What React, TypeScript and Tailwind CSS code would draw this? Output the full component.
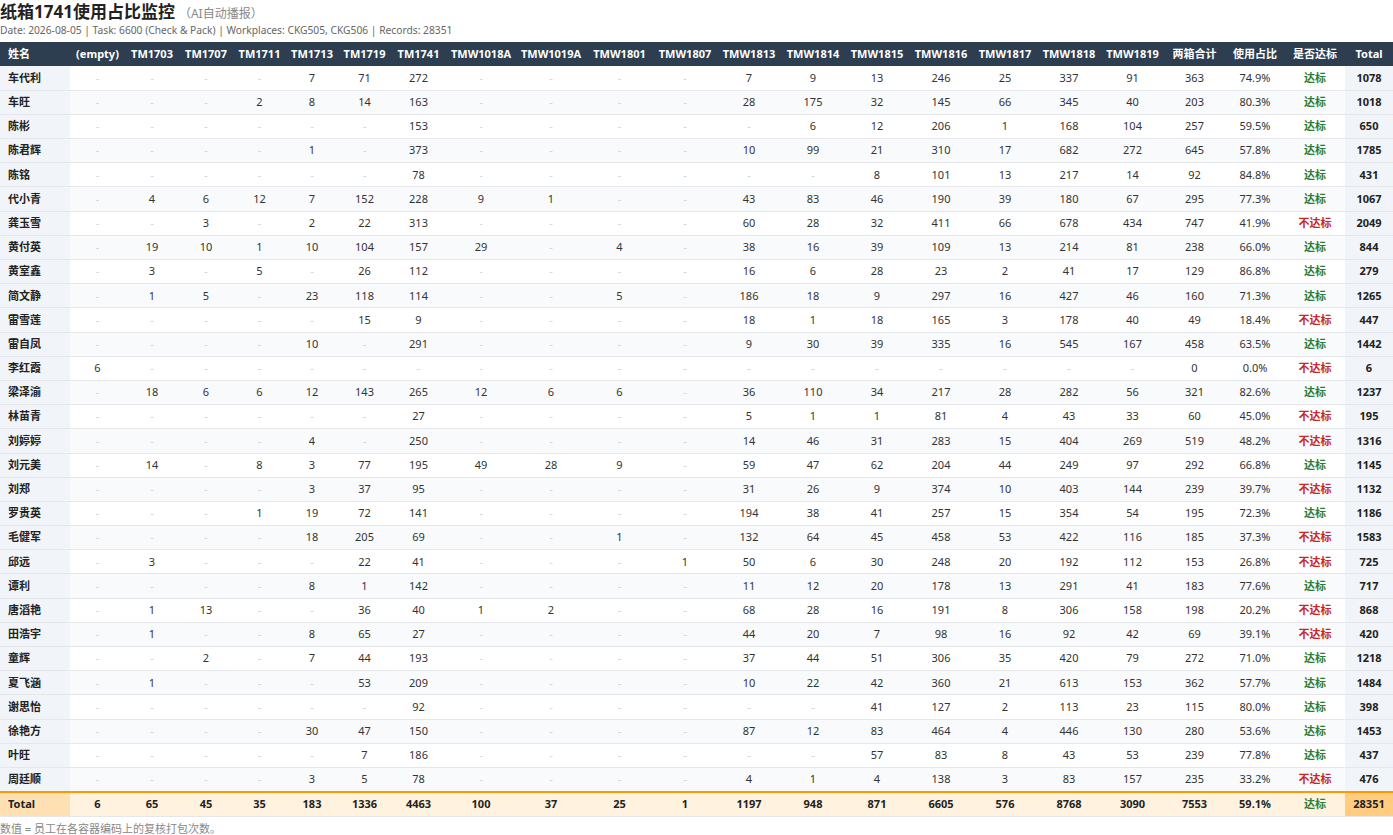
import React from "react";

type Row = {
  name: string;
  vals: (number | null)[];
  sum: number;
  pct: string;
  ok: boolean;
  total: number;
};

const cols = [
  { label: "(empty)", w: "w-[55px]" },
  { label: "TM1703", w: "w-[54px]" },
  { label: "TM1707", w: "w-[54px]" },
  { label: "TM1711", w: "w-[53px]" },
  { label: "TM1713", w: "w-[52px]" },
  { label: "TM1719", w: "w-[53px]" },
  { label: "TM1741", w: "w-[55px]" },
  { label: "TMW1018A", w: "w-[70px]" },
  { label: "TMW1019A", w: "w-[70px]" },
  { label: "TMW1801", w: "w-[67px]" },
  { label: "TMW1807", w: "w-[64px]" },
  { label: "TMW1813", w: "w-[64px]" },
  { label: "TMW1814", w: "w-[64px]" },
  { label: "TMW1815", w: "w-[64px]" },
  { label: "TMW1816", w: "w-[64px]" },
  { label: "TMW1817", w: "w-[64px]" },
  { label: "TMW1818", w: "w-[64px]" },
  { label: "TMW1819", w: "w-[63px]" },
];

const _ = null;

const rows: Row[] = [
  { name: "车代利", vals: [_, _, _, _, 7, 71, 272, _, _, _, _, 7, 9, 13, 246, 25, 337, 91], sum: 363, pct: "74.9%", ok: true, total: 1078 },
  { name: "车旺", vals: [_, _, _, 2, 8, 14, 163, _, _, _, _, 28, 175, 32, 145, 66, 345, 40], sum: 203, pct: "80.3%", ok: true, total: 1018 },
  { name: "陈彬", vals: [_, _, _, _, _, _, 153, _, _, _, _, _, 6, 12, 206, 1, 168, 104], sum: 257, pct: "59.5%", ok: true, total: 650 },
  { name: "陈君辉", vals: [_, _, _, _, 1, _, 373, _, _, _, _, 10, 99, 21, 310, 17, 682, 272], sum: 645, pct: "57.8%", ok: true, total: 1785 },
  { name: "陈铭", vals: [_, _, _, _, _, _, 78, _, _, _, _, _, _, 8, 101, 13, 217, 14], sum: 92, pct: "84.8%", ok: true, total: 431 },
  { name: "代小青", vals: [_, 4, 6, 12, 7, 152, 228, 9, 1, _, _, 43, 83, 46, 190, 39, 180, 67], sum: 295, pct: "77.3%", ok: true, total: 1067 },
  { name: "龚玉雪", vals: [_, _, 3, _, 2, 22, 313, _, _, _, _, 60, 28, 32, 411, 66, 678, 434], sum: 747, pct: "41.9%", ok: false, total: 2049 },
  { name: "黄付英", vals: [_, 19, 10, 1, 10, 104, 157, 29, _, 4, _, 38, 16, 39, 109, 13, 214, 81], sum: 238, pct: "66.0%", ok: true, total: 844 },
  { name: "黄室鑫", vals: [_, 3, _, 5, _, 26, 112, _, _, _, _, 16, 6, 28, 23, 2, 41, 17], sum: 129, pct: "86.8%", ok: true, total: 279 },
  { name: "简文静", vals: [_, 1, 5, _, 23, 118, 114, _, _, 5, _, 186, 18, 9, 297, 16, 427, 46], sum: 160, pct: "71.3%", ok: true, total: 1265 },
  { name: "雷雪莲", vals: [_, _, _, _, _, 15, 9, _, _, _, _, 18, 1, 18, 165, 3, 178, 40], sum: 49, pct: "18.4%", ok: false, total: 447 },
  { name: "雷自凤", vals: [_, _, _, _, 10, _, 291, _, _, _, _, 9, 30, 39, 335, 16, 545, 167], sum: 458, pct: "63.5%", ok: true, total: 1442 },
  { name: "李红霞", vals: [6, _, _, _, _, _, _, _, _, _, _, _, _, _, _, _, _, _], sum: 0, pct: "0.0%", ok: false, total: 6 },
  { name: "梁泽渝", vals: [_, 18, 6, 6, 12, 143, 265, 12, 6, 6, _, 36, 110, 34, 217, 28, 282, 56], sum: 321, pct: "82.6%", ok: true, total: 1237 },
  { name: "林苗青", vals: [_, _, _, _, _, _, 27, _, _, _, _, 5, 1, 1, 81, 4, 43, 33], sum: 60, pct: "45.0%", ok: false, total: 195 },
  { name: "刘婷婷", vals: [_, _, _, _, 4, _, 250, _, _, _, _, 14, 46, 31, 283, 15, 404, 269], sum: 519, pct: "48.2%", ok: false, total: 1316 },
  { name: "刘元美", vals: [_, 14, _, 8, 3, 77, 195, 49, 28, 9, _, 59, 47, 62, 204, 44, 249, 97], sum: 292, pct: "66.8%", ok: true, total: 1145 },
  { name: "刘郑", vals: [_, _, _, _, 3, 37, 95, _, _, _, _, 31, 26, 9, 374, 10, 403, 144], sum: 239, pct: "39.7%", ok: false, total: 1132 },
  { name: "罗贵英", vals: [_, _, _, 1, 19, 72, 141, _, _, _, _, 194, 38, 41, 257, 15, 354, 54], sum: 195, pct: "72.3%", ok: true, total: 1186 },
  { name: "毛健军", vals: [_, _, _, _, 18, 205, 69, _, _, 1, _, 132, 64, 45, 458, 53, 422, 116], sum: 185, pct: "37.3%", ok: false, total: 1583 },
  { name: "邱远", vals: [_, 3, _, _, _, 22, 41, _, _, _, 1, 50, 6, 30, 248, 20, 192, 112], sum: 153, pct: "26.8%", ok: false, total: 725 },
  { name: "谭利", vals: [_, _, _, _, 8, 1, 142, _, _, _, _, 11, 12, 20, 178, 13, 291, 41], sum: 183, pct: "77.6%", ok: true, total: 717 },
  { name: "唐滔艳", vals: [_, 1, 13, _, _, 36, 40, 1, 2, _, _, 68, 28, 16, 191, 8, 306, 158], sum: 198, pct: "20.2%", ok: false, total: 868 },
  { name: "田浩宇", vals: [_, 1, _, _, 8, 65, 27, _, _, _, _, 44, 20, 7, 98, 16, 92, 42], sum: 69, pct: "39.1%", ok: false, total: 420 },
  { name: "童辉", vals: [_, _, 2, _, 7, 44, 193, _, _, _, _, 37, 44, 51, 306, 35, 420, 79], sum: 272, pct: "71.0%", ok: true, total: 1218 },
  { name: "夏飞涵", vals: [_, 1, _, _, _, 53, 209, _, _, _, _, 10, 22, 42, 360, 21, 613, 153], sum: 362, pct: "57.7%", ok: true, total: 1484 },
  { name: "谢思怡", vals: [_, _, _, _, _, _, 92, _, _, _, _, _, _, 41, 127, 2, 113, 23], sum: 115, pct: "80.0%", ok: true, total: 398 },
  { name: "徐艳方", vals: [_, _, _, _, 30, 47, 150, _, _, _, _, 87, 12, 83, 464, 4, 446, 130], sum: 280, pct: "53.6%", ok: true, total: 1453 },
  { name: "叶旺", vals: [_, _, _, _, _, 7, 186, _, _, _, _, _, _, 57, 83, 8, 43, 53], sum: 239, pct: "77.8%", ok: true, total: 437 },
  { name: "周廷顺", vals: [_, _, _, _, 3, 5, 78, _, _, _, _, 4, 1, 4, 138, 3, 83, 157], sum: 235, pct: "33.2%", ok: false, total: 476 },
];

const totals = [6, 65, 45, 35, 183, 1336, 4463, 100, 37, 25, 1, 1197, 948, 871, 6605, 576, 8768, 3090];

function Status({ ok }: { ok: boolean }) {
  return ok ? (
    <span className="font-bold text-[#2e7d32]">达标</span>
  ) : (
    <span className="font-bold text-[#c62828]">不达标</span>
  );
}

export default function App() {
  return (
    <div
      className="bg-white text-[#333]"
      style={{ fontFamily: '"Noto Sans", "Noto Sans CJK SC", sans-serif' }}
    >
      <div className="flex items-baseline gap-1 h-[24px]">
        <h1 className="text-[17px] font-bold leading-[24px] text-[#222]">纸箱1741使用占比监控</h1>
        <span className="text-[12px] text-[#888]">（AI自动播报）</span>
      </div>
      <div className="text-[10.25px] leading-[12px] text-[#666]">
        Date: 2026-08-05 | Task: 6600 (Check &amp; Pack) | Workplaces: CKG505, CKG506 | Records: 28351
      </div>

      <table className="mt-[6px] w-full table-fixed border-collapse text-[11px]">
        <colgroup>
          <col className="w-[70px]" />
          {cols.map((c) => (
            <col key={c.label} className={c.w} />
          ))}
          <col className="w-[61px]" />
          <col className="w-[60px]" />
          <col className="w-[60px]" />
          <col className="w-[48px]" />
        </colgroup>
        <thead>
          <tr className="h-[24px] bg-[#2c3e50] text-white">
            <th className="px-2 text-left font-bold">姓名</th>
            {cols.map((c) => (
              <th key={c.label} className="px-1 text-center font-bold whitespace-nowrap">
                {c.label}
              </th>
            ))}
            <th className="text-center font-bold">两箱合计</th>
            <th className="text-center font-bold">使用占比</th>
            <th className="text-center font-bold">是否达标</th>
            <th className="text-center font-bold">Total</th>
          </tr>
        </thead>
        <tbody>
          {rows.map((r, i) => (
            <tr
              key={r.name}
              className={`h-[24.2px] border-b border-[#e5e7eb] ${i % 2 === 1 ? "bg-[#f8fafc]" : "bg-white"}`}
            >
              <td className="px-2 text-left font-bold bg-[#f1f5f9] text-[#222]">{r.name}</td>
              {r.vals.map((v, j) => (
                <td key={j} className="text-center">
                  {v === null ? <span className="text-[#cbd5e1]">-</span> : v}
                </td>
              ))}
              <td className="text-center">{r.sum}</td>
              <td className="text-center">{r.pct}</td>
              <td className="text-center">
                <Status ok={r.ok} />
              </td>
              <td className="text-center font-bold bg-[#f1f5f9] text-[#222]">{r.total}</td>
            </tr>
          ))}
          <tr className="h-[25px] border-t-2 border-t-[#ff9800] border-b border-b-[#e5e7eb] bg-[#fff3e0] font-bold text-[#222]">
            <td className="px-2 text-left bg-[#ffe0b2]">Total</td>
            {totals.map((t, j) => (
              <td key={j} className="text-center">
                {t}
              </td>
            ))}
            <td className="text-center">7553</td>
            <td className="text-center">59.1%</td>
            <td className="text-center">
              <Status ok />
            </td>
            <td className="text-center bg-[#ffcc80]">28351</td>
          </tr>
        </tbody>
      </table>

      <div className="mt-[4px] text-[11px] text-[#888]">数值 = 员工在各容器编码上的复核打包次数。</div>
    </div>
  );
}
